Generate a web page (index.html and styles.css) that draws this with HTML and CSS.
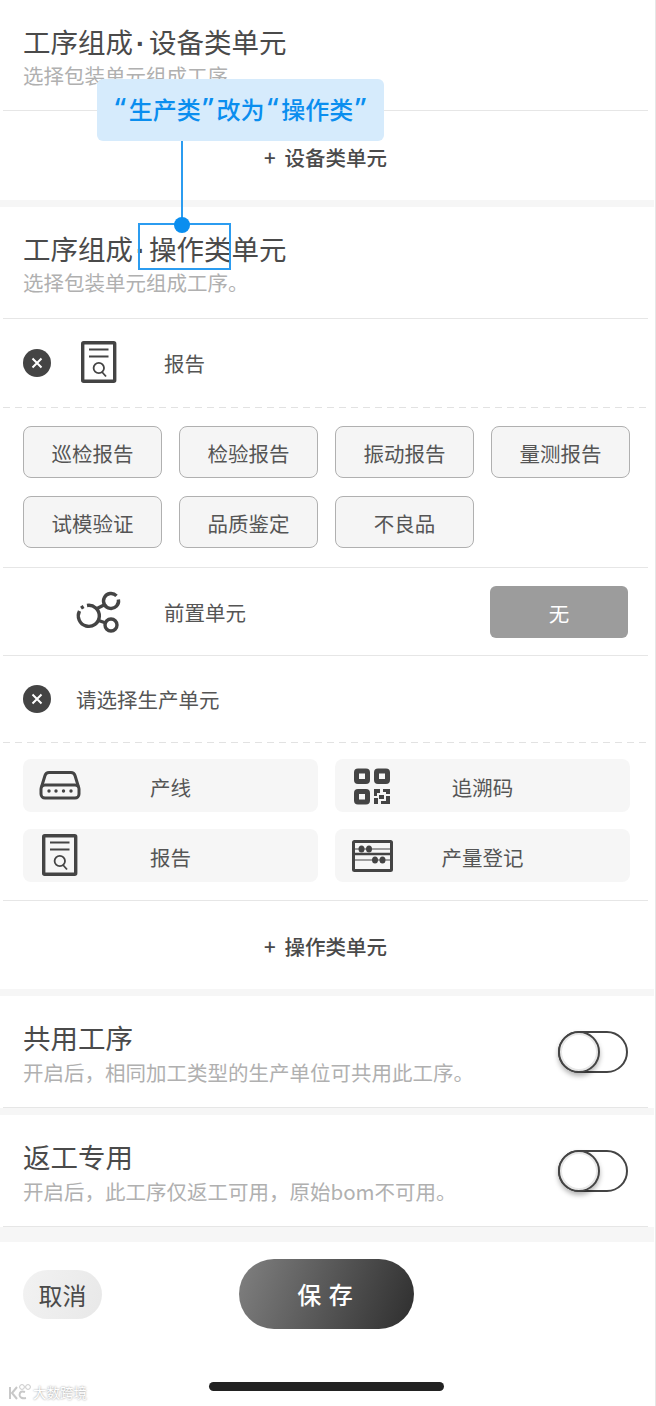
FILE: index.html
```html
<!DOCTYPE html>
<html lang="zh-CN">
<head>
  <meta charset="UTF-8">
  <title>工序组成</title>
  <link rel="stylesheet" href="styles.css">
</head>
<body>

<svg class="defs" width="0" height="0">
  <symbol id="icon-report" viewBox="0 0 36 42">
    <rect x="1.7" y="1.7" width="32" height="38.6" rx="1" fill="none" stroke="#444" stroke-width="3.4"/>
    <path d="M8 8.5H27.5M8 15.5H27.5" fill="none" stroke="#444" stroke-width="1.8"/>
    <circle cx="17.8" cy="27" r="5.2" fill="none" stroke="#444" stroke-width="1.8"/>
    <path d="M21 31L25 35.5" fill="none" stroke="#444" stroke-width="1.8"/>
  </symbol>
  <symbol id="icon-close" viewBox="0 0 28 28">
    <circle cx="14" cy="14" r="14" fill="#444"/>
    <path d="M9.5 9.5L18.5 18.5M18.5 9.5L9.5 18.5" fill="none" stroke="#fff" stroke-width="2"/>
  </symbol>
</svg>

<div class="page">

  <section class="block block-first">
    <div class="head">
      <div class="title">工序组成<span class="dot">·</span>设备类单元</div>
      <div class="sub">选择包装单元组成工序。</div>
    </div>
    <div class="add add-short"><span class="plus">+</span>设备类单元</div>
  </section>

  <section class="block">
    <div class="head">
      <div class="title">工序组成<span class="dot">·</span><span class="changed">操作类</span>单元</div>
      <div class="sub">选择包装单元组成工序。</div>
    </div>

    <div class="row row-dashed row-report">
      <svg class="close"><use href="#icon-close"/></svg>
      <svg class="report-icon"><use href="#icon-report"/></svg>
      <span class="row-label">报告</span>
    </div>

    <div class="tags">
      <div class="tag">巡检报告</div>
      <div class="tag">检验报告</div>
      <div class="tag">振动报告</div>
      <div class="tag">量测报告</div>
      <div class="tag">试模验证</div>
      <div class="tag">品质鉴定</div>
      <div class="tag">不良品</div>
    </div>

    <div class="row row-solid">
      <svg class="share-icon" viewBox="0 0 60 60">
        <g fill="none" stroke="#444" stroke-width="3.4">
          <path d="M17 20.5A10.5 10.5 0 1 1 9.5 26"/>
          <path d="M11 23.2L13.6 21.5"/>
          <path d="M46.5 10.8A7.5 7.5 0 1 0 48.4 14.5"/>
          <circle cx="41" cy="40" r="6"/>
          <path d="M26 24L34 20M27 35L36 38"/>
        </g>
      </svg>
      <span class="row-label">前置单元</span>
      <div class="none-btn">无</div>
    </div>

    <div class="row row-dashed row-pick">
      <svg class="close"><use href="#icon-close"/></svg>
      <span class="row-label pick-label">请选择生产单元</span>
    </div>

    <div class="units">
      <div class="unit">
        <svg class="unit-icon icon-drive" viewBox="0 0 60 40">
          <path d="M11.5 22L15 10.5Q16 7.5 19 7.5H41Q44 7.5 45 10.5L48.5 22" fill="none" stroke="#444" stroke-width="3"/>
          <rect x="11" y="20" width="38" height="13" rx="4" fill="none" stroke="#444" stroke-width="3"/>
          <circle cx="19" cy="26" r="1.7" fill="#444"/><circle cx="26" cy="26" r="1.7" fill="#444"/>
          <circle cx="33.5" cy="26" r="1.7" fill="#444"/><circle cx="41" cy="26" r="1.7" fill="#444"/>
        </svg>
        <span class="unit-name">产线</span>
      </div>
      <div class="unit">
        <svg class="unit-icon icon-qr" viewBox="0 0 55 50">
          <g fill="none" stroke="#444" stroke-width="5">
            <rect x="11.5" y="9" width="11" height="10.5" rx="1.5"/>
            <rect x="31.5" y="9" width="11" height="10.5" rx="1.5"/>
            <rect x="11.5" y="29.5" width="11" height="10.5" rx="1.5"/>
          </g>
          <path d="M29 27H35V31H32V34H29ZM38 27H45V32H41V30H38ZM34 33H39V37H34ZM29 36H33V42H29ZM41 34H45V42H36V39H41Z" fill="#444"/>
        </svg>
        <span class="unit-name">追溯码</span>
      </div>
      <div class="unit">
        <svg class="unit-icon icon-report-small"><use href="#icon-report"/></svg>
        <span class="unit-name">报告</span>
      </div>
      <div class="unit">
        <svg class="unit-icon icon-abacus" viewBox="0 0 55 50">
          <rect x="8.5" y="9.5" width="38" height="29" rx="1" fill="none" stroke="#444" stroke-width="3"/>
          <path d="M9 22H46" stroke="#444" stroke-width="2.4"/>
          <path d="M9 17H46M9 28H46" stroke="#444" stroke-width="1"/>
          <ellipse cx="16.5" cy="17" rx="3" ry="3.6" fill="#444"/><ellipse cx="24" cy="17" rx="3" ry="3.6" fill="#444"/>
          <ellipse cx="30" cy="28" rx="3" ry="3.6" fill="#444"/><ellipse cx="37.5" cy="28" rx="3" ry="3.6" fill="#444"/>
        </svg>
        <span class="unit-name">产量登记</span>
      </div>
    </div>

    <div class="add add-tall"><span class="plus">+</span>操作类单元</div>
  </section>

  <section class="block">
    <div class="switch-row">
      <div class="switch-text">
        <div class="switch-title">共用工序</div>
        <div class="sub">开启后，相同加工类型的生产单位可共用此工序。</div>
      </div>
      <div class="switch"><span class="knob"></span></div>
    </div>
  </section>

  <section class="block block-last">
    <div class="switch-row">
      <div class="switch-text">
        <div class="switch-title">返工专用</div>
        <div class="sub">开启后，此工序仅返工可用，原始bom不可用。</div>
      </div>
      <div class="switch"><span class="knob"></span></div>
    </div>
  </section>

  <div class="footer">
    <div class="cancel">取消</div>
    <div class="save">保 存</div>
  </div>

  <div class="bottom">
    <div class="home-bar"></div>
  </div>

  <!-- 标注 -->
  <div class="note"><span class="q q-open">“</span>生产类<span class="q q-close">”</span>改为<span class="q q-open">“</span>操作类<span class="q q-close">”</span></div>
  <div class="note-line"></div>
  <div class="note-dot"></div>

  <div class="watermark">
    <svg class="mark-logo" viewBox="0 0 25 16">
      <path d="M3 3V15M10 3L5 9L10 15M18 8Q13 6 12.5 11Q13 15 19 14" fill="none" stroke="#c8c8c8" stroke-width="2"/>
      <circle cx="15" cy="3" r="2.4" fill="none" stroke="#c8c8c8"/><circle cx="21" cy="3" r="2.4" fill="none" stroke="#c8c8c8"/>
    </svg>
    <span class="mark-text">大数跨境</span>
  </div>

</div>

</body>
</html>
```

FILE: styles.css
```css
*, *::before {
  box-sizing: border-box;
}

body {
  margin: 0;
  background: #fff;
  font-family: "Noto Sans CJK SC", "Noto Sans", sans-serif;
  color: #4a4a4a;
}

.defs {
  display: block;
}

.page {
  position: relative;
  width: 656px;
  height: 1406px;
  overflow: hidden;
  background: #fff;
  border-right: 1px solid #e6e6e6;
}

.block {
  width: 654px;
  padding: 0 6px 0 3px;
  background: #fff;
  border-bottom: 7px solid #f6f6f6;
}

.block-first {
  height: 207px;
}

.block-last {
  border-bottom-width: 15px;
}

.head {
  height: 112px;
  padding: 22px 0 0 20px;
  border-bottom: 1px solid #e6e6e6;
}

.block-first .head {
  height: 111px;
}

.title {
  font-size: 27.5px;
  line-height: 39px;
  white-space: nowrap;
}

.dot {
  display: inline-block;
  width: 16px;
  padding-left: 3px;
  font-family: "Liberation Sans", sans-serif;
  font-weight: bold;
}

.changed {
  position: relative;
  display: inline-block;
}

.changed::before {
  content: "";
  position: absolute;
  left: -11px;
  top: -6px;
  width: 93px;
  height: 47px;
  border: 2px solid #2b9cf0;
}

.sub {
  font-size: 20.5px;
  line-height: 24px;
  color: #b0b0b0;
  white-space: nowrap;
}

.add {
  font-size: 20.5px;
  font-weight: 500;
  text-align: center;
  color: #4a4a4a;
}

.plus {
  margin-right: 9px;
}

.add-short {
  padding-top: 31px;
}

.add-tall {
  padding-top: 30px;
  height: 88px;
}

.row {
  display: flex;
  align-items: center;
  padding-left: 20px;
}

.row-dashed {
  height: 89px;
  background: repeating-linear-gradient(to right, #e2e2e2 0 7px, transparent 7px 12px) bottom / 100% 1px no-repeat;
}

.row-report {
  padding-bottom: 2px;
}

.row-solid {
  height: 89px;
  border-top: 1px solid #e6e6e6;
  border-bottom: 1px solid #e6e6e6;
}

.row-pick {
  height: 87px;
  padding-bottom: 1px;
}

.close {
  width: 28px;
  height: 28px;
  flex: none;
}

.report-icon {
  width: 36px;
  height: 42px;
  margin: 0 0 2px 30px;
  flex: none;
}

.share-icon {
  width: 60px;
  height: 60px;
  margin: 6px 0 0 47px;
  flex: none;
}

.row-label {
  margin-left: 47px;
  font-size: 20.5px;
  color: #555;
}

.share-icon + .row-label {
  margin-left: 34px;
}

.pick-label {
  margin-left: 25px;
}

.none-btn {
  width: 138px;
  height: 52px;
  margin: 1px 20px 0 auto;
  border-radius: 6px;
  background: #9c9c9c;
  color: #fff;
  font-size: 20.5px;
  line-height: 54px;
  text-align: center;
}

.tags {
  display: grid;
  grid-template-columns: repeat(4, 139px);
  gap: 18px 17px;
  padding: 18px 0 19px 20px;
}

.tag {
  height: 52px;
  border: 1px solid #b0b0b0;
  border-radius: 8px;
  background: #f5f5f5;
  color: #555;
  font-size: 20.5px;
  line-height: 53px;
  text-align: center;
}

.units {
  display: grid;
  grid-template-columns: repeat(2, 295px);
  gap: 17px;
  padding: 16px 0 18px 20px;
  border-bottom: 1px solid #e6e6e6;
}

.unit {
  position: relative;
  display: flex;
  align-items: center;
  justify-content: center;
  height: 53px;
  padding-top: 2px;
  border-radius: 8px;
  background: #f6f6f6;
  color: #555;
  font-size: 20.5px;
}

.unit-icon {
  position: absolute;
}

.icon-drive {
  left: 7px;
  top: 6px;
  width: 60px;
  height: 40px;
}

.icon-qr {
  left: 10px;
  top: 3px;
  width: 55px;
  height: 50px;
}

.icon-report-small {
  left: 19px;
  top: 5px;
  width: 36px;
  height: 42px;
}

.icon-abacus {
  left: 10px;
  top: 3px;
  width: 55px;
  height: 50px;
}

.switch-row {
  display: flex;
  align-items: center;
  justify-content: space-between;
  height: 112px;
  padding: 0 20px;
  border-bottom: 1px solid #e6e6e6;
}

.switch-text {
  margin-bottom: 2px;
}

.switch-title {
  margin-bottom: 2px;
  font-size: 27.5px;
  line-height: 41px;
}

.switch {
  position: relative;
  width: 70px;
  height: 42px;
  border: 2px solid #444;
  border-radius: 21px;
}

.knob {
  position: absolute;
  left: -2px;
  top: -2px;
  width: 42px;
  height: 42px;
  border-radius: 50%;
  border: 2px solid #444;
  background: #fff;
  box-shadow: inset 0 0 0 2px #e8e8e8, 0 3px 5px rgba(0,0,0,0.3);
}

.footer {
  display: flex;
  align-items: center;
  height: 104px;
  padding-left: 23px;
  background: #fff;
}

.cancel {
  width: 79px;
  height: 49px;
  border-radius: 25px;
  background: linear-gradient(110deg, #f2f2f2, #e8e8e8);
  font-size: 24px;
  line-height: 49px;
  text-align: center;
}

.save {
  width: 175px;
  height: 70px;
  margin-left: 137px;
  padding-right: 3px;
  border-radius: 35px;
  background: linear-gradient(110deg, #808080, #2e2e2e);
  color: #fff;
  font-size: 24px;
  font-weight: 500;
  line-height: 70px;
  text-align: center;
  word-spacing: 2px;
}

.bottom {
  padding: 36px 0 0 209px;
}

.home-bar {
  width: 235px;
  height: 9px;
  border-radius: 5px;
  background: #222;
}

.note {
  position: absolute;
  left: 97px;
  top: 79px;
  width: 287px;
  height: 62px;
  border-radius: 6px;
  background: #d6ebfc;
  color: #0a8eef;
  font-size: 24px;
  font-weight: 500;
  line-height: 58px;
  text-align: center;
  white-space: nowrap;
}

.q {
  font-family: "Noto Sans", sans-serif;
  font-size: 28px;
}

.q-open {
  margin: 0 3px;
}

.q-close {
  margin: 0 3px 0 2px;
}

.note-line {
  position: absolute;
  left: 181px;
  top: 141px;
  width: 2px;
  height: 80px;
  background: #2b9cf0;
}

.note-dot {
  position: absolute;
  left: 174px;
  top: 217px;
  width: 16px;
  height: 16px;
  border-radius: 50%;
  background: #0a8eef;
}

.watermark {
  position: absolute;
  left: 7px;
  top: 1384px;
  display: flex;
  align-items: center;
  gap: 1px;
}

.mark-logo {
  width: 25px;
  height: 16px;
}

.mark-text {
  color: #fff;
  font-size: 13.5px;
  line-height: 16px;
  text-shadow: 0 0 2px #888;
}
```
